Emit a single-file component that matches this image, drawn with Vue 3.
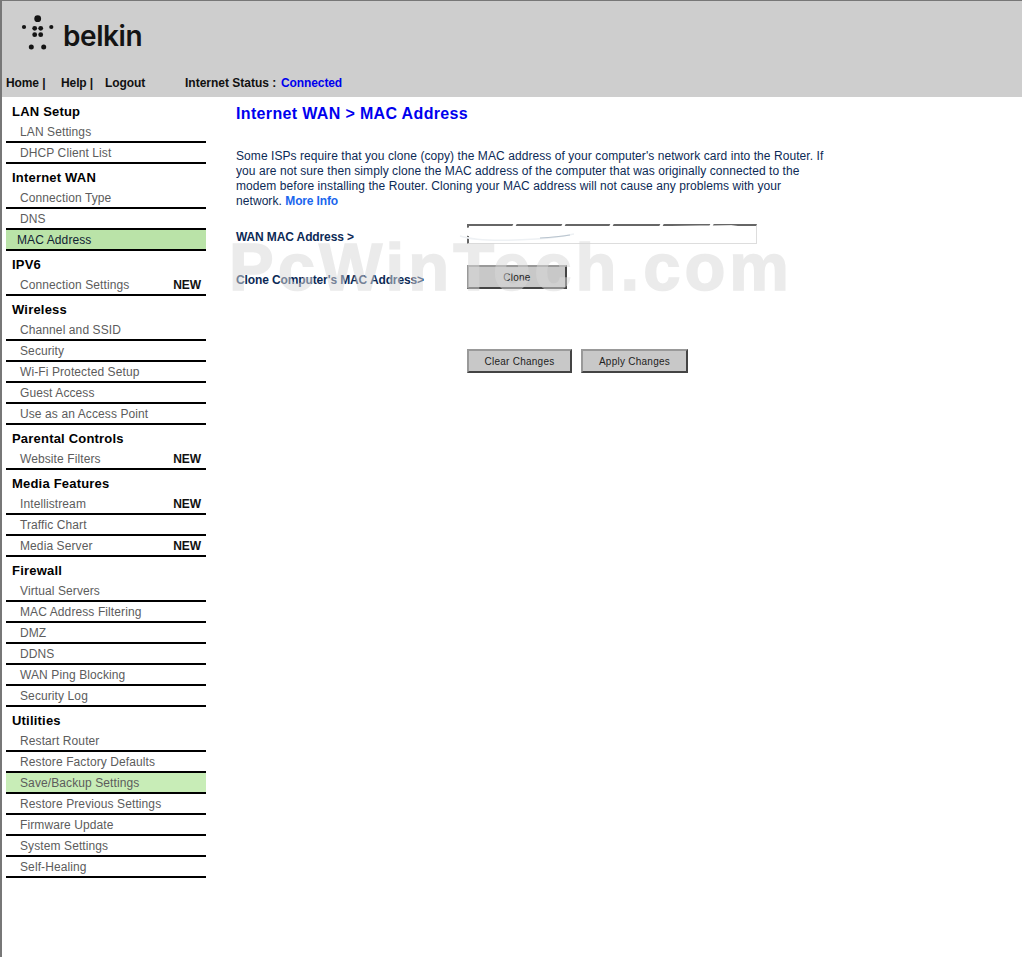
<script setup>
const groups = [
  { title: 'LAN Setup', items: [{ t: 'LAN Settings' }, { t: 'DHCP Client List' }] },
  { title: 'Internet WAN', items: [{ t: 'Connection Type' }, { t: 'DNS' }, { t: 'MAC Address', active: true }] },
  { title: 'IPV6', items: [{ t: 'Connection Settings', isNew: true }] },
  { title: 'Wireless', items: [{ t: 'Channel and SSID' }, { t: 'Security' }, { t: 'Wi-Fi Protected Setup' }, { t: 'Guest Access' }, { t: 'Use as an Access Point' }] },
  { title: 'Parental Controls', items: [{ t: 'Website Filters', isNew: true }] },
  { title: 'Media Features', items: [{ t: 'Intellistream', isNew: true }, { t: 'Traffic Chart' }, { t: 'Media Server', isNew: true }] },
  { title: 'Firewall', items: [{ t: 'Virtual Servers' }, { t: 'MAC Address Filtering' }, { t: 'DMZ' }, { t: 'DDNS' }, { t: 'WAN Ping Blocking' }, { t: 'Security Log' }] },
  { title: 'Utilities', items: [{ t: 'Restart Router' }, { t: 'Restore Factory Defaults' }, { t: 'Save/Backup Settings', hover: true }, { t: 'Restore Previous Settings' }, { t: 'Firmware Update' }, { t: 'System Settings' }, { t: 'Self-Healing' }] }
]
const gaps = [57, 106, 154, 204, 254]
</script>

<template>
  <div class="page">
    <header class="top">
      <div class="logo">
        <svg class="mark" width="36" height="38" viewBox="0 0 36 38">
          <g fill="#141414">
            <circle cx="15.7" cy="3.7" r="3.4" />
            <circle cx="2" cy="12" r="2.1" />
            <circle cx="29.3" cy="12" r="2.1" />
            <circle cx="12.7" cy="13.3" r="2.4" /><circle cx="18.7" cy="13.3" r="2.4" />
            <circle cx="12.7" cy="19.7" r="2.4" /><circle cx="18.7" cy="19.7" r="2.4" />
            <circle cx="9.3" cy="32" r="2.5" /><circle cx="21.7" cy="32" r="2.5" />
          </g>
        </svg>
        <span class="word">belkin</span>
      </div>
      <nav class="nav">
        <span class="n1">Home |</span>
        <span class="n2">Help |</span>
        <span class="n3">Logout</span>
        <span class="n4">Internet Status :</span>
        <span class="conn">Connected</span>
      </nav>
    </header>
    <div class="body">
      <aside class="side">
        <section v-for="g in groups" :key="g.title">
          <h3>{{ g.title }}</h3>
          <div
            v-for="i in g.items"
            :key="i.t"
            class="row"
            :class="{ active: i.active, hover: i.hover }"
          >
            <span>{{ i.t }}</span>
            <b v-if="i.isNew">NEW</b>
          </div>
        </section>
      </aside>
      <main class="main">
        <h1>Internet WAN &gt; MAC Address</h1>
        <p class="intro">Some ISPs require that you clone (copy) the MAC address of your computer's network card into the Router. If you are not sure then simply clone the MAC address of the computer that was originally connected to the modem before installing the Router. Cloning your MAC address will not cause any problems with your network. <a>More Info</a></p>
        <div class="field f1">
          <label>WAN MAC Address &gt;</label>
          <div class="macbox"></div>
        </div>
        <div class="field f2">
          <label>Clone Computer's MAC Address&gt;</label>
          <button class="btn clone">Clone</button>
        </div>
        <div class="actions">
          <button class="btn clear">Clear Changes</button>
          <button class="btn apply">Apply Changes</button>
        </div>
        <svg class="smear" width="310" height="30" viewBox="0 0 310 30">
          <path v-for="x in gaps" :key="x" :d="`M${x} 9L${x + 3} 3`" stroke="#fff" stroke-width="3" fill="none" />
          <path d="M1 13C6 6 30 8 60 9C120 8 220 7 282 6C240 13 150 17 90 21C60 24 20 22 1 13Z" fill="#fff" />
          <path d="M4 17C20 22 50 22 80 20C95 19 105 18 118 15" stroke="#eef1f4" stroke-width="1.5" fill="none" />
          <path d="M84 19C92 18.5 104 17.5 114 16" stroke="#b9c4ce" stroke-width="1.2" fill="none" />
        </svg>
        <div class="mark-text">PcWinTech.com</div>
      </main>
    </div>
  </div>
</template>

<style>
html, body { margin: 0; background: #fff; }
</style>

<style scoped>
.page {
  width: 1022px;
  height: 957px;
  box-sizing: border-box;
  border-left: 2px solid #777;
  border-top: 1px solid #777;
  font-family: "Liberation Sans", Arial, sans-serif;
  overflow: hidden;
}
.top {
  height: 96px;
  background: #cecece;
  display: flex;
  flex-direction: column;
}
.logo {
  height: 74px;
  display: flex;
  align-items: flex-start;
  padding: 14px 0 0 20px;
  box-sizing: border-box;
  gap: 5px;
}
.mark { overflow: visible; }
.word {
  font-family: Inter, sans-serif;
  font-weight: 600;
  font-size: 28px;
  line-height: 40px;
  color: #141414;
  letter-spacing: -0.45px;
  margin-top: 1px;
}
.nav {
  display: flex;
  padding-left: 4px;
  font-size: 12px;
  font-weight: 700;
  color: #111;
  line-height: 16px;
  letter-spacing: -0.1px;
}
.n1 { width: 55px; }
.n2 { width: 44px; }
.n3 { width: 80px; }
.n4 { width: 96px; letter-spacing: 0; }
.conn { color: #0000ee; }
.body { display: flex; }
.side { width: 200px; margin-left: 4px; padding-top: 1px; flex: none; }
h3 {
  margin: 0;
  box-sizing: border-box;
  height: 24px;
  padding: 1px 0 0 6px;
  line-height: 25px;
  font-size: 13px;
  letter-spacing: 0.2px;
  font-weight: 700;
  color: #000;
}
.row {
  height: 19px;
  border-bottom: 2px solid #000;
  line-height: 21px;
  padding: 0 5px 0 14px;
  font-size: 12px;
  letter-spacing: 0.1px;
  color: #5c5c5c;
  display: flex;
  justify-content: space-between;
}
.row b { color: #111; letter-spacing: -0.05px; }
.active { background: #bae3a8; color: #123; padding-left: 11px; }
.hover { background: #c8edb7; }
.main {
  position: relative;
  flex: 1;
  padding-left: 30px;
}
h1 {
  margin: 0;
  padding-top: 7px;
  font-size: 16px;
  line-height: 20px;
  font-weight: 700;
  letter-spacing: 0.35px;
  color: #0000ee;
}
.intro {
  margin: 25px 0 0;
  width: 590px;
  font-size: 12px;
  line-height: 15px;
  letter-spacing: 0.07px;
  color: #0c2a56;
}
.intro a { color: #1a66ee; font-weight: 700; letter-spacing: -0.15px; }
.field { display: flex; align-items: center; }
label {
  width: 231px;
  font-size: 12px;
  font-weight: 700;
  letter-spacing: -0.12px;
  color: #0c2a56;
}
.f1 { margin-top: 15px; }
.f1 label { padding-top: 5px; }
.f2 { margin-top: 21px; }
.f2 label { padding-top: 6px; }
.macbox {
  width: 287px;
  height: 17px;
  border: 1px solid #ddd;
  border-top: 2px solid #666;
  border-left: 2px solid #666;
  background: #fff;
}
.btn {
  box-sizing: border-box;
  padding: 0;
  font-family: inherit;
  font-size: 10px;
  letter-spacing: 0.25px;
  color: #222;
  background: #c8c8c8;
  border: 2px solid;
  border-color: #999 #444 #444 #999;
}
.clone { width: 100px; height: 24px; }
.actions { display: flex; gap: 9px; margin-top: 60px; padding-left: 231px; }
.clear { width: 105px; height: 24px; }
.apply { width: 107px; height: 24px; }
.smear { position: absolute; left: 250px; top: 122px; }
.mark-text {
  position: absolute;
  left: 23px;
  top: 135px;
  font-size: 67px;
  line-height: 70px;
  letter-spacing: 4px;
  font-weight: 700;
  white-space: nowrap;
  color: #d8d8d8;
  -webkit-text-stroke: 1.5px #d8d8d8;
  opacity: 0.5;
  pointer-events: none;
}
</style>
